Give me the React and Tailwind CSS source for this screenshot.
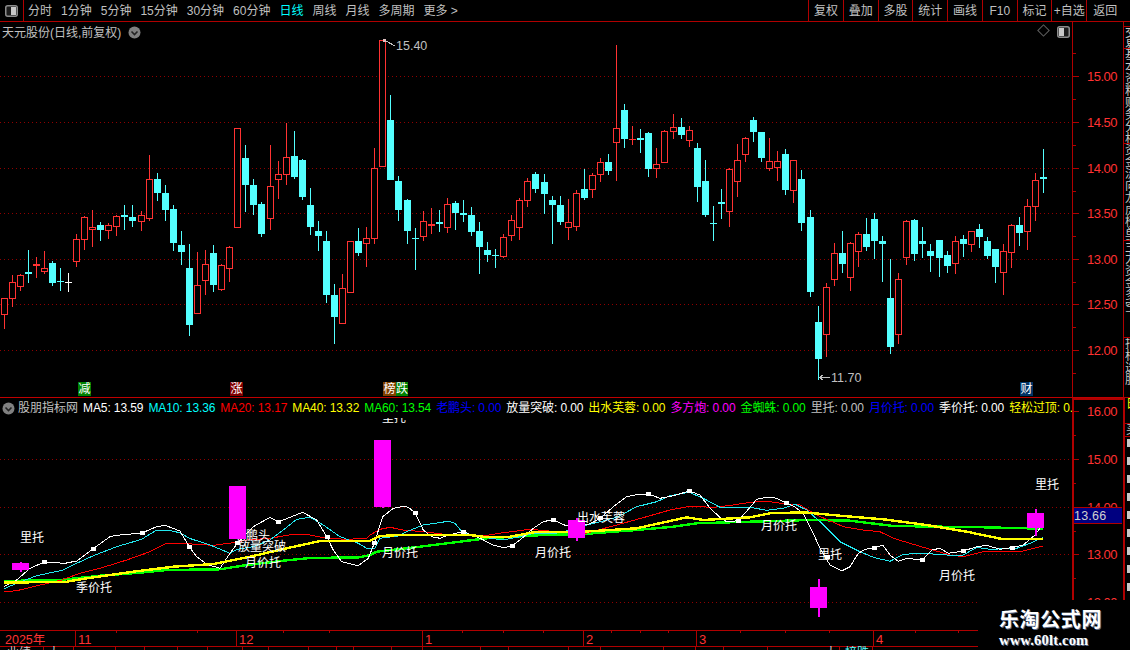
import React from "react";

const RED = "#b00000";
const TXT = "#ff3232";
const CY = "#54ffff";

const G1 = [[13,'r',505,505,554,597],[37,'r',435,457,506,530],[61,'r',432,436,470,483],[85,'c',360,427,431,459],[109,'r',381,403,407,444],[133,'r',363,415,425,432],[157,'c',393,400,459,468],[181,'c',414,453,455,483],[205,'w',430,456,458,486],[229,'r',312,328,395,411],[253,'r',258,262,329,360],[277,'r',240,292,299,351],[301,'c',277,285,300,333],[325,'r',279,286,302,327],[349,'r',255,259,290,318],[373,'c',225,255,261,300],[397,'c',225,261,273,291],[424,'r',243,256,275,303],[448,'r',75,148,266,273],[472,'c',129,147,189,213],[496,'c',165,189,240,273],[520,'c',225,237,339,363],[544,'c',303,345,366,405],[568,'c',342,414,585,618],[592,'r',366,466,551,551],[616,'r',360,403,452,495],[640,'c',345,369,465,486],[664,'r',402,406,479,482],[688,'r',348,352,416,456],[712,'r',-6,-6,293,293],[736,'c',45,84,165,246],[760,'c',147,165,225,255],[784,'c',216,222,312,321],[811,'r',45,169,266,300],[835,'r',93,133,149,207],[859,'r',-21,82,134,165],[883,'c',3,78,141,147],[907,'c',87,90,201,210],[931,'c',174,225,291,315],[955,'c',273,303,318,363],[979,'c',303,333,495,519],[1003,'c',462,495,561,642],[1027,'r',432,475,581,581],[1051,'r',334,334,488,488],[1075,'c',294,333,369,378],[1099,'r',291,325,341,411]];
const G2 = [[13,'r',354,415,626,642],[37,'r',30,30,412,412],[61,'c',195,270,450,450],[85,'c',438,453,540,573],[112,'c',507,510,603,642],[136,'c',594,624,627,720],[160,'r',543,574,620,633],[184,'r',534,582,587,612],[208,'c',540,575,581,606],[232,'r',504,523,593,609],[256,'c',513,519,549,600],[280,'c',510,549,554,576],[304,'c',531,555,606,618],[328,'c',576,603,651,732],[352,'c',636,660,675,696],[376,'c',657,675,678,714],[400,'r',612,622,680,684],[424,'r',555,571,617,633],[448,'r',504,511,593,630],[472,'r',444,454,512,531],[496,'c',426,432,477,489],[523,'c',432,456,492,552],[547,'c',498,510,525,642],[571,'c',498,525,576,585],[595,'r',507,577,593,630],[619,'r',480,490,590,603],[643,'c',417,477,504,510],[667,'r',429,436,479,504],[691,'r',384,397,436,456],[715,'c',372,396,423,435],[739,'r',45,295,338,453],[763,'c',222,240,327,354],[787,'r',288,327,331,345],[811,'c',297,324,329,369],[835,'c',306,309,417,441],[859,'r',354,403,418,444],[883,'r',300,304,398,398],[910,'r',252,292,305,327],[934,'c',264,291,315,327],[958,'r',288,301,332,351],[982,'c',339,354,471,516],[1006,'c',390,453,555,561],[1030,'c',528,579,581,633],[1054,'c',477,517,521,567],[1078,'r',414,418,545,591],[1102,'r',342,391,455,501],[1126,'r',321,325,374,396]];
const G3 = [[10,'c',-39,-30,5,36],[34,'c',6,6,84,96],[58,'r',24,94,118,122],[82,'r',63,94,115,153],[106,'c',57,72,180,195],[130,'r',90,91,182,219],[154,'c',120,147,279,303],[181,'c',240,261,486,501],[205,'c',528,576,687,750],[229,'r',459,472,614,681],[253,'r',339,370,449,468],[277,'c',303,369,402,429],[301,'r',336,340,443,483],[325,'r',306,313,365,411],[349,'c',264,312,351,363],[373,'c',249,267,333,387],[397,'c',318,333,342,456],[421,'c',387,504,651,672],[445,'r',429,448,614,642],[469,'r',270,274,383,405],[493,'c',267,270,372,393],[517,'c',291,333,342,384],[541,'c',342,363,378,426],[568,'c',330,330,384,441],[592,'c',363,375,408,429],[616,'r',318,334,401,432],[640,'c',315,327,342,381],[664,'r',303,304,344,366],[688,'c',282,297,321,354],[712,'c',321,333,378,387],[736,'c',357,357,411,459],[760,'r',342,364,428,495],[784,'r',282,286,368,414],[808,'c',261,285,309,348],[832,'r',207,229,305,360],[856,'r',129,151,230,273],[880,'c',57,142,147,189]];

const candles = [
  ...G1.map((c) => conv(c, 0, 130)),
  ...G2.map((c) => conv(c, 370, 30)),
  ...G3.map((c) => conv(c, 750, 130)),
];
function conv(c, ox, oy) {
  const y = (v) => Math.round(oy + v / 3);
  return { x: Math.floor(ox + c[0] / 3) + 0.5, t: c[1], wt: y(c[2]), bt: y(c[3]), bb: y(c[4]), wb: y(c[5]) };
}

function Candle({ c }) {
  const col = c.t === 'r' ? "#ff3232" : c.t === 'c' ? CY : "#ffffff";
  const flat = c.bb - c.bt <= 2;
  return (
    <g>
      <line x1={c.x} x2={c.x} y1={c.wt} y2={c.bt} stroke={col} />
      <line x1={c.x} x2={c.x} y1={c.bb} y2={c.wb} stroke={col} />
      {c.t === 'r' && !flat ? (
        <rect x={c.x - 3} y={c.bt + 0.5} width={6} height={c.bb - c.bt - 1} fill="#000" stroke={col} />
      ) : (
        <rect x={c.x - 3.5} y={c.bt} width={7} height={Math.max(c.bb - c.bt, 1)} fill={col} />
      )}
    </g>
  );
}

const z = (pts, ox) => pts.map(([a, b]) => [ox + a / 3, 430 + b / 3]);
const path = (pts) => pts.map((p) => p[0].toFixed(1) + "," + p[1].toFixed(1)).join(" ");

const white = [
  ...z([[12,470],[50,450],[90,415],[133,396],[195,400],[230,393],[278,357],[330,320],[350,316],[425,309],[470,290],[495,286],[540,303],[568,350],[590,380],[620,403],[660,415],[690,370],[712,340],[760,290],[810,262],[835,276],[880,258],[908,247],[950,270],[980,320],[1000,360],[1025,395],[1075,407],[1105,385]], 0),
  ...z([[13,340],[38,260],[70,235],[100,229],[115,232],[136,249],[160,300],[185,320],[210,325],[235,315],[280,305],[330,325],[370,345],[400,353],[425,348],[450,330],[490,295],[520,275],[548,269],[590,288],[620,275],[650,285],[691,265],[730,230],[770,200],[810,192],[835,192],[870,205],[910,197],[958,183],[990,195],[1020,235],[1050,262],[1070,275],[1105,272]], 370),
  ...z([[0,232],[20,208],[55,201],[80,205],[107,218],[130,228],[160,250],[185,300],[210,355],[240,405],[275,423],[300,410],[325,370],[345,358],[373,354],[398,345],[420,375],[445,394],[470,385],[517,390],[545,360],[570,355],[595,370],[640,363],[680,350],[710,346],[750,358],[785,353],[820,345],[855,315],[870,295]], 750),
];
const cyan = [
  ...z([[12,476],[50,460],[110,437],[190,420],[230,400],[278,378],[350,350],[425,328],[465,303],[500,300],[540,308],[568,325],[630,345],[690,370],[712,358],[760,350],[810,330],[850,300],[890,268],[930,262],[970,285],[1020,320],[1075,340],[1100,355],[1125,355]], 0),
  ...z([[30,325],[85,318],[110,305],[160,285],[235,274],[255,280],[280,310],[330,320],[400,330],[450,320],[490,310],[548,312],[600,300],[650,285],[691,275],[740,262],[800,230],[860,215],[900,197],[958,187],[1000,205],[1050,232]], 370),
  ...z([[0,232],[50,241],[100,235],[135,223],[170,240],[210,275],[270,335],[330,365],[370,382],[420,394],[460,373],[520,370],[590,375],[640,375],[680,352],[720,358],[800,355],[840,340],[880,322]], 750),
];
const red = [
  ...z([[12,485],[50,482],[100,470],[185,450],[240,430],[300,415],[380,390],[450,365],[495,342],[540,340],[640,346],[700,338],[740,330],[810,325],[880,313],[920,313],[980,325],[1040,328],[1100,325]], 0),
  ...z([[0,315],[30,298],[60,292],[100,300],[160,305],[240,315],[340,318],[400,308],[480,298],[560,305],[640,312],[740,285],[830,260],[900,240],[960,229],[1030,232],[1090,225]], 370),
  ...z([[0,217],[50,214],[110,222],[150,225],[200,255],[280,290],[340,300],[390,305],[430,325],[520,352],[600,375],[640,380],[700,365],[820,363],[880,348]], 750),
];
const yellow = [
  ...z([[12,458],[200,455],[260,445],[400,425],[520,410],[640,402],[700,390],[760,378],[860,355],[960,333]], 0),
  ...z([[0,332],[30,318],[90,315],[300,315],[340,320],[420,320],[500,305],[640,305],[720,300],[800,295],[950,262],[1000,270]], 370),
  ...z([[0,262],[60,250],[160,247],[280,258],[400,268],[530,285],[650,305],[760,328],[880,327]], 750),
];
const green = [
  ...z([[12,453],[180,450],[300,437],[420,428],[500,420],[660,418],[740,405],[850,392],[930,384],[1080,382]], 0),
  ...z([[0,375],[20,365],[150,350],[350,325],[520,315],[640,312],[800,300],[910,290],[980,280]], 370),
  ...z([[0,275],[180,270],[300,272],[430,288],[700,292],[880,296]], 750),
];
const markers = [
  ...z([[133,396],[278,357],[425,309],[568,350],[712,340],[835,276],[980,320],[1123,340]], 0),
  ...z([[136,249],[280,305],[425,348],[548,269],[691,265],[835,192],[958,183],[1105,272]], 370),
  ...z([[107,218],[230,380],[373,354],[517,390],[640,363],[785,353]], 750),
];

const blocks = [
  [12, 563, 17, 7, 20.5, 562, 572],
  [568, 520, 17, 18, 576.5, 518, 541],
  [810, 587, 17, 21, 818.5, 579, 617],
  [1027, 513, 17, 15, 1035.5, 509, 536],
  [229, 486, 17, 53, 237.5, 486, 539],
  [374, 440, 17, 67, 382.5, 440, 508],
];

const labels = [
  ["里托", 20, 542], ["季价托", 76, 592], ["放量突破", 238, 551], ["月价托", 245, 567], ["月价托", 382, 557], ["月价托", 535, 557],
  ["出水芙蓉", 577, 522], ["月价托", 761, 530], ["里托", 818, 559], ["月价托", 939, 580], ["里托", 1035, 489], ["里托", 382, 422],
];

const Dots = ({ y, x2 = 1072 }) => <line x1="0" x2={x2} y1={y + 0.5} y2={y + 0.5} stroke="#900000" strokeDasharray="1 3" />;

function Chevron() {
  return (
    <svg width="13" height="13" viewBox="0 0 13 13" className="shrink-0">
      <circle cx="6.5" cy="6.5" r="6" fill="#808080" />
      <path d="M3.5 5.5 L6.5 8.5 L9.5 5.5" fill="none" stroke="#222" strokeWidth="1.6" />
    </svg>
  );
}

function PanelIcon({ left }) {
  return (
    <svg width="13" height="12" viewBox="0 0 13 12" className="shrink-0">
      <rect x="0.75" y="0.75" width="11.5" height="10.5" rx="2" fill="#1c1c1c" stroke="#8c8c8c" strokeWidth="1.5" />
      {left ? <rect x="2" y="2" width="5" height="8" fill="#c8c8c8" /> : <rect x="6" y="2" width="5" height="8" fill="#c8c8c8" />}
    </svg>
  );
}

const navItems = ["分时", "1分钟", "5分钟", "15分钟", "30分钟", "60分钟", "日线", "周线", "月线", "多周期", "更多 >"];
const btns = ["复权", "叠加", "多股", "统计", "画线", "F10", "标记", "+自选", "返回"];
const legend = [
  ["MA5: 13.59", "text-white"], ["MA10: 13.36", "text-[#00ffff]"], ["MA20: 13.17", "text-[#ff0000]"], ["MA40: 13.32", "text-[#ffff00]"],
  ["MA60: 13.54", "text-[#00ff00]"], ["老鹏头: 0.00", "text-[#0000ff]"], ["放量突破: 0.00", "text-white"], ["出水芙蓉: 0.00", "text-[#ffff00]"],
  ["多方炮: 0.00", "text-[#ff00ff]"], ["金蜘蛛: 0.00", "text-[#00ff00]"], ["里托: 0.00", "text-[#c0c0c0]"], ["月价托: 0.00", "text-[#0000ff]"],
  ["季价托: 0.00", "text-white"], ["轻松过顶: 0.00", "text-[#ffff00]"],
];
const upperAxis = [[76, "15.00"], [122, "14.50"], [168, "14.00"], [213, "13.50"], [259, "13.00"], [304, "12.50"], [350, "12.00"]];
const lowerAxis = [[411, "16.00"], [459, "15.00"], [507, "14.00"], [554, "13.00"], [602, "12.00"]];
const months = [[75, "11"], [236, "12"], [422, "1"], [583, "2"], [696, "3"], [873, "4"]];
const topTicks = [116, 197, 283, 329, 462, 503, 543, 611, 640, 668, 740, 785, 829, 915, 958];
const botTicks = [43, 73, 115, 144, 177, 207, 242, 268, 308, 336, 353, 391, 422, 480, 508, 568, 600, 663, 695, 723, 767, 839, 872];

function SideCell({ h, text, lower, color = "text-[#c8c8c8]" }) {
  return (
    <div className={`overflow-hidden border-b border-[#b00000] ${lower ? "border-l-2" : "border-l"} border-l-[#b00000] pl-[1px] ${color} ${h}`}>
      <div className="w-[12px] text-[12px] leading-[12px] break-all">{text}</div>
    </div>
  );
}

export default function App() {
  return (
    <div className="relative flex h-[650px] w-[1130px] flex-col overflow-hidden bg-black font-['Liberation_Sans','Noto_Sans_CJK_SC',sans-serif] text-[12px] text-[#c0c0c0]">
      <div className="flex h-[22px] shrink-0 items-center border-b border-[#b00000]">
        <div className="flex h-full w-[24px] shrink-0 items-center justify-center border-r border-[#b00000]">
          <PanelIcon />
        </div>
        <div className="flex items-center gap-[9px] pl-[4px] pt-[1px]">
          {navItems.map((n) => (
            <span key={n} className={n === "日线" ? "text-[#00ffff]" : ""}>{n}</span>
          ))}
        </div>
        <div className="ml-auto flex h-full w-[322px] shrink-0">
          {btns.map((b, i) => (
            <div key={b} className={`flex h-full items-center justify-center whitespace-nowrap border-l border-[#b00000] ${i === 8 ? "w-[44px] pr-[7px]" : "w-[35px]"}`}>{b}</div>
          ))}
        </div>
      </div>

      <div className="flex min-h-0 flex-1">
        <div className="flex w-[1123px] shrink-0 flex-col">
          <div className="relative h-[376px] shrink-0 border-b border-[#c00000]">
            <svg className="absolute inset-0" width="1123" height="375" viewBox="0 22 1123 375" shapeRendering="crispEdges">
              {upperAxis.map(([y]) => <Dots key={y} y={y} />)}
              {candles.map((c, i) => <Candle key={i} c={c} />)}
              <line x1="1072.5" x2="1072.5" y1="22" y2="397" stroke={RED} />
              {upperAxis.map(([y, t], i) => (
                <g key={t}>
                  <line x1="1072" x2="1079" y1={y + 0.5} y2={y + 0.5} stroke={RED} />
                  <line x1="1072" x2="1076" y1={y + 23.5} y2={y + 23.5} stroke={RED} />
                  {i === 0 && <line x1="1072" x2="1076" y1={y - 22.5} y2={y - 22.5} stroke={RED} />}
                  <text x="1087" y={y + 5} fill={TXT} fontSize="13" letterSpacing="-0.5" shapeRendering="auto">{t}</text>
                </g>
              ))}
              <path d="M386 41 L395 46" stroke="#c0c0c0" fill="none" />
              <rect x="383" y="39" width="3" height="3" fill="#e0c0c0" />
              <text x="396" y="50" fill="#c0c0c0" fontSize="12.5">15.40</text>
              <path d="M819 377.5 H830 M819 377.5 L823 375 M819 377.5 L823 380" stroke="#c0c0c0" fill="none" />
              <text x="831" y="382" fill="#c0c0c0" fontSize="12.5">11.70</text>
            </svg>
            <div className="relative flex h-[20px] items-center pl-[2px] pt-[1px]">
              <span>天元股份(日线,前复权)</span>
              <span className="ml-[7px]"><Chevron /></span>
              <span className="absolute left-[1039px] top-[4px] h-[9px] w-[9px] rotate-45 border border-[#606060]" />
              <span className="absolute left-[1057px] top-[4px]"><PanelIcon left /></span>
            </div>
            <div className="absolute left-[78px] top-[360px] w-[13px] bg-[#008000] text-center leading-[14px] text-white">减</div>
            <div className="absolute left-[230px] top-[360px] w-[13px] bg-[#800000] text-center leading-[14px] text-white">涨</div>
            <div className="absolute left-[383px] top-[360px] flex">
              <span className="w-[13px] bg-[#804000] text-center leading-[14px] text-white">榜</span>
              <span className="w-[12px] bg-[#008000] text-center leading-[14px] text-white">跌</span>
            </div>
            <div className="absolute left-[1020px] top-[360px] w-[13px] bg-[#003366] text-center leading-[14px] text-white">财</div>
          </div>

          <div className="relative h-[232px] shrink-0">
            <svg className="absolute inset-0" width="1123" height="232" viewBox="0 398 1123 232" shapeRendering="crispEdges">
              {[459, 507, 554, 602].map((y) => <Dots key={y} y={y} />)}
              <polyline points={path(green)} fill="none" stroke="#00ff00" strokeWidth="2.4" />
              <polyline points={path(red)} fill="none" stroke="#ff0000" />
              <polyline points={path(cyan)} fill="none" stroke="#22e8f0" />
              <polyline points={path(white)} fill="none" stroke="#ffffff" />
              <polyline points={path(yellow)} fill="none" stroke="#ffff00" strokeWidth="2.4" />
              {markers.map((m, i) => <rect key={i} x={Math.round(m[0]) - 2} y={Math.round(m[1]) - 2} width="5" height="4" fill="#ffffff" />)}
              <text x="234" y="540" fill="#fff" fontSize="12" shapeRendering="auto">老鹏头</text>
              {blocks.map((b, i) => (
                <g key={i} fill="#ff00ff">
                  <rect x={b[0]} y={b[1]} width={b[2]} height={b[3]} />
                  <rect x={b[4] - 1} y={b[5]} width="2" height={b[6] - b[5]} />
                </g>
              ))}
              {labels.map(([t, x, y], i) => <text key={i} x={x} y={y} fill="#fff" fontSize="12" shapeRendering="auto">{t}</text>)}
              <rect x="1072" y="398" width="2" height="232" fill={RED} />
              <rect x="1072" y="398" width="51" height="2" fill={RED} />
              {lowerAxis.map(([y, t]) => (
                <g key={t}>
                  <line x1="1072" x2="1079" y1={y + 0.5} y2={y + 0.5} stroke={RED} />
                  <line x1="1072" x2="1076" y1={y + 24.5} y2={y + 24.5} stroke={RED} />
                  <text x="1087" y={y + 5} fill={TXT} fontSize="13" letterSpacing="-0.5" shapeRendering="auto">{t}</text>
                </g>
              ))}
              <rect x="1074" y="507" width="48" height="16" fill="#000080" />
              <line x1="1074" x2="1122" y1="507.5" y2="507.5" stroke={RED} />
              <line x1="1074" x2="1122" y1="523.5" y2="523.5" stroke={RED} />
              <text x="1074" y="520" fill="#d0d0d0" fontSize="12.5" letterSpacing="0.2" shapeRendering="auto">13.66</text>
            </svg>
            <div className="relative flex h-[20px] w-[1072px] items-center overflow-hidden whitespace-nowrap bg-black pl-[2px]">
              <Chevron />
              <span className="ml-[3px] text-[#c0c0c0]">股朋指标网</span>
              <div className="ml-[5px] flex gap-[5px] tracking-[-0.1px]">
                {legend.map(([t, c]) => <span key={t} className={`shrink-0 ${c}`}>{t}</span>)}
              </div>
            </div>
          </div>

          <div className="h-[20px] shrink-0">
            <svg width="1123" height="20" viewBox="0 630 1123 20" shapeRendering="crispEdges">
              <rect x="0" y="630" width="978" height="1" fill={RED} />
              <rect x="0" y="646" width="978" height="1" fill={RED} />
              {topTicks.map((x) => <rect key={x} x={x} y="631" width="1" height="2" fill={RED} />)}
              {botTicks.map((x) => <rect key={x} x={x} y="647" width="1" height="3" fill={RED} />)}
              {months.map(([x, t]) => (
                <g key={t}>
                  <rect x={x} y="630" width="1" height="16" fill={RED} />
                  <text x={x + 3} y="644" fill={TXT} fontSize="13" shapeRendering="auto">{t}</text>
                </g>
              ))}
              <text x="5" y="644" fill={TXT} fontSize="12.5" shapeRendering="auto">2025年</text>
              <text x="7" y="657" fill="#d0d0d0" fontSize="12" shapeRendering="auto">业绩</text>
              <text x="48" y="657" fill="#d0d0d0" fontSize="12" shapeRendering="auto">大</text>
              <text x="825" y="657" fill="#d0d0d0" fontSize="12" shapeRendering="auto">大</text>
              <text x="845" y="657" fill={CY} fontSize="12" shapeRendering="auto">榜跌</text>
            </svg>
          </div>
        </div>

        <div className="flex w-[7px] shrink-0 flex-col">
          <SideCell h="h-[5px]" text="" />
          <SideCell h="h-[22px]" text="交易" />
          <SideCell h="h-[95px]" text="基本资料财务分析行情数据" />
          <SideCell h="h-[97px]" text="资金流向龙虎榜单股东研究" />
          <SideCell h="h-[97px]" text="主力资金多空" />
          <SideCell h="h-[60px]" text="指标选股" />
          <SideCell h="h-[26px]" text="日" lower color="text-[#ffff00]" />
          <SideCell h="h-[13px]" text="买" lower />
          <div className="flex h-[163px] flex-col items-end gap-[10px] border-l-2 border-[#b00000] pt-[2px]">
            {[0, 1, 2, 3, 4, 5, 6, 7, 8].map((i) => <span key={i} className="block h-[8px] w-[3px] shrink-0 bg-[#c8c8c8]" />)}
          </div>
        </div>
      </div>

      <div className="absolute bottom-0 right-0 flex h-[50px] w-[152px] flex-col items-start bg-black pl-[21px] pt-[6px]">
        <span className="text-[20px] font-bold leading-[26px] tracking-[0.6px] text-white [text-shadow:1px_1px_0_#5a6a8a] font-['Noto_Sans_CJK_SC',sans-serif]">乐淘公式网</span>
        <span className="mt-[1px] text-[14.5px] font-bold leading-[14px] tracking-[0.2px] text-white [text-shadow:1px_1px_0_#5a6a8a] font-['Liberation_Serif',serif]">www.60lt.com</span>
      </div>
    </div>
  );
}
